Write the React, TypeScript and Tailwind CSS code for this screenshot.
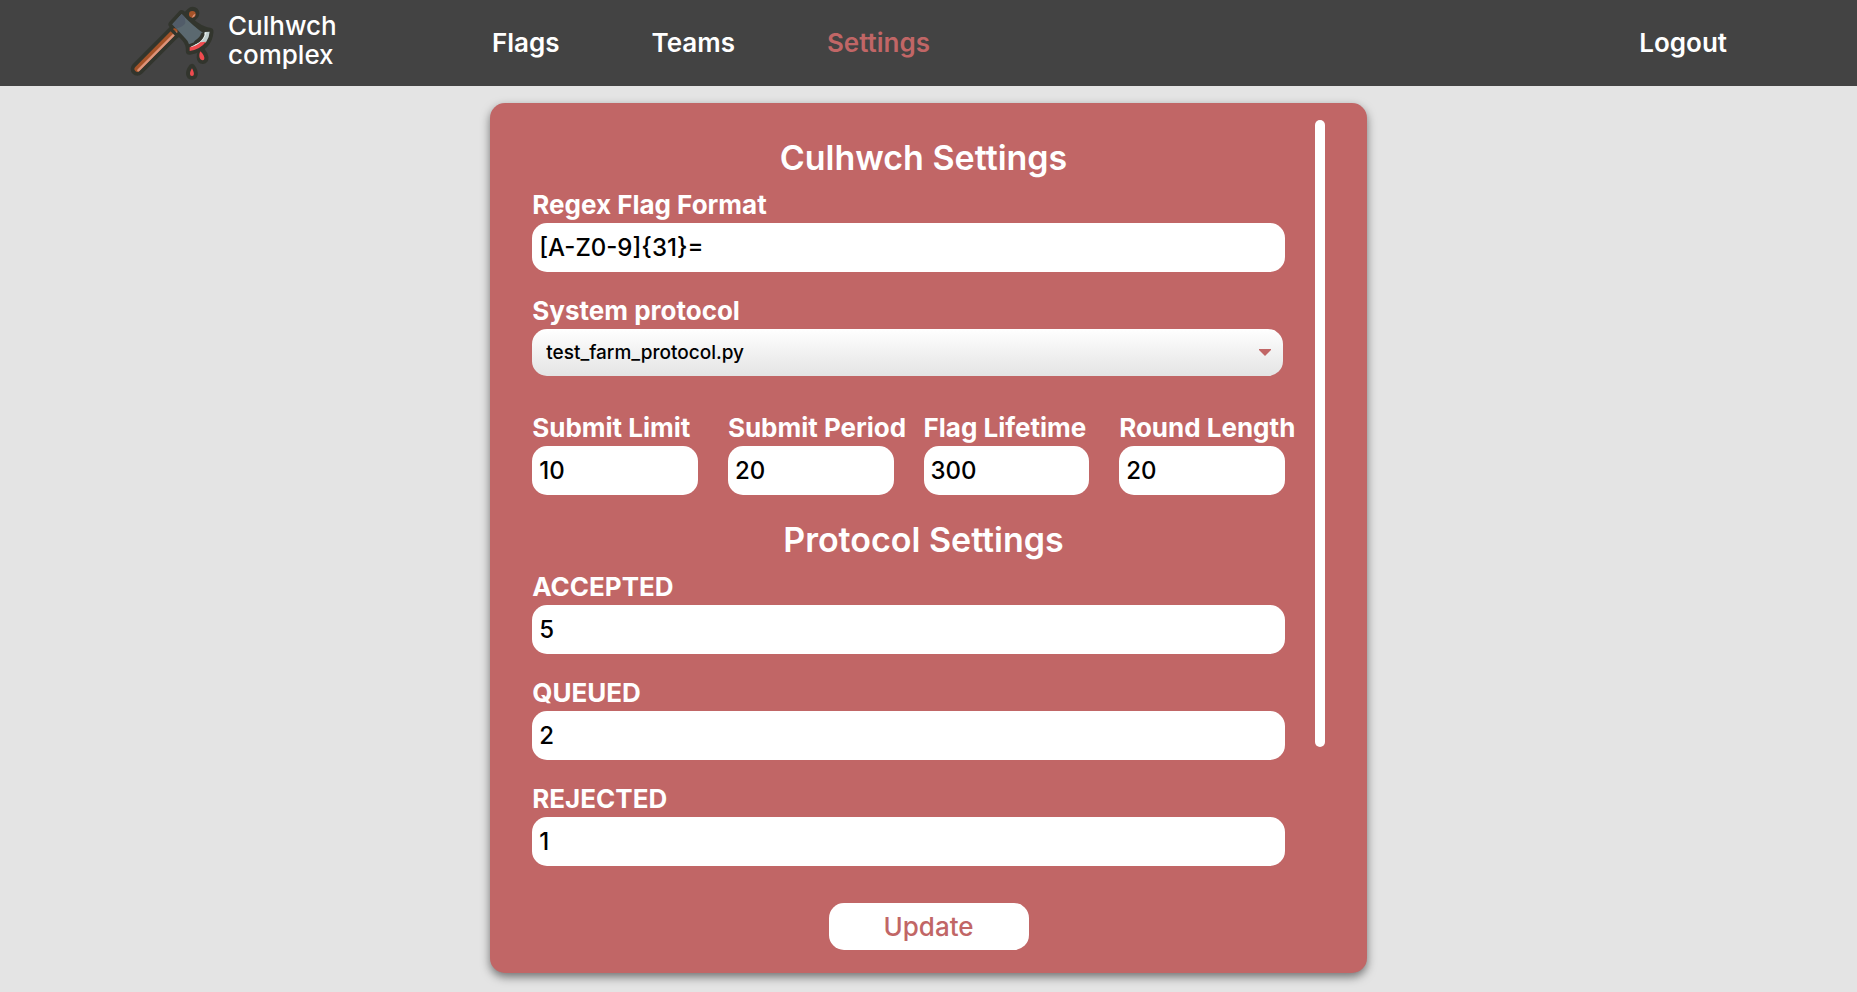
import { useState } from "react";

const numberFields = [
  { id: "submit-limit", label: "Submit Limit", value: "10" },
  { id: "submit-period", label: "Submit Period", value: "20" },
  { id: "flag-lifetime", label: "Flag Lifetime", value: "300" },
  { id: "round-length", label: "Round Length", value: "20" },
];

const protocolFields = [
  { id: "accepted", label: "ACCEPTED", value: "5" },
  { id: "queued", label: "QUEUED", value: "2" },
  { id: "rejected", label: "REJECTED", value: "1" },
];

function AxeLogo() {
  return (
    <svg viewBox="30 15 252 225" className="h-[75px] w-[84px] shrink-0" aria-hidden="true">
      <g stroke="#32352d" strokeLinecap="round" strokeLinejoin="round" fill="#32352d">
        <path d="M52 204L218 37" strokeWidth="40" />
        <path
          d="M185 39L157 70L197 113Q210 128 209 150Q266 139 269 92Q235 88 185 39Z"
          strokeWidth="23"
        />
        <path d="M246 152C238 164 240 178 248 178C257 178 257 164 246 152Z" strokeWidth="22" />
        <path d="M216 199C204 215 207 226 216 226C225 226 227 215 216 199Z" strokeWidth="20" />
      </g>
      <path d="M52 204L164 91" stroke="#a65328" strokeWidth="17" strokeLinecap="round" />
      <path d="M55 208L168 95" stroke="#dd937a" strokeWidth="7" strokeLinecap="round" />
      <path d="M150 82L176 108" stroke="#32352d" strokeWidth="10" />
      <circle cx="217" cy="40" r="10" fill="#a65328" />
      <path d="M215 50Q225 48 226 38L220 42Z" fill="#dd937a" />
      <path d="M185 39L157 70L197 113Q205 120 207 130L226 122L250 96Q222 78 185 39Z" fill="#5b6970" />
      <path d="M185 39L157 70L169 82Q190 78 196 66Q196 55 193 47Z" fill="#515c69" />
      <path d="M254 93L269 92Q268 110 258 124L226 134Q250 118 254 93Z" fill="#bfcdcd" />
      <path d="M258 94Q252 118 224 134L213 139" stroke="#e8efed" strokeWidth="4" fill="none" />
      <path d="M248 101Q243 115 228 123" stroke="#32352d" strokeWidth="11" strokeLinecap="round" fill="none" />
      <path d="M209 139Q230 136 241 124L258 122Q242 144 209 150Z" fill="#ef4b4f" />
      <path d="M241 151C234 166 240 178 248 178C257 178 254 162 241 151Z" fill="#ef4b4f" />
      <path d="M216 202C207 216 209 225 216 225C223 225 224 216 216 202Z" fill="#ef4b4f" />
    </svg>
  );
}

function Field({ id, label, value }: { id: string; label: string; value: string }) {
  return (
    <div className="flex min-w-0 flex-col">
      <label htmlFor={id} className="h-[31px] text-[26px] leading-[25px] font-bold whitespace-nowrap">
        {label}
      </label>
      <input
        id={id}
        type="text"
        defaultValue={value}
        className="h-[49px] w-full rounded-[15px] bg-white px-[7px] text-2xl font-medium text-black outline-none"
      />
    </div>
  );
}

export default function App() {
  const [protocol, setProtocol] = useState("test_farm_protocol.py");

  return (
    <div className="flex min-h-screen flex-col bg-[#e4e4e4] font-['Inter','Liberation_Sans',sans-serif] text-white">
      <header className="flex h-[86px] items-center bg-[#434343] px-[7%] text-[26px] font-semibold">
        <a href="#home" className="flex w-[362px] items-center gap-[14px] font-medium">
          <AxeLogo />
          <span className="pb-[6px] leading-[29px]">
            Culhwch
            <br />
            complex
          </span>
        </a>
        <nav className="flex flex-1 gap-[92px] pb-[2px]">
          <a href="#flags">Flags</a>
          <a href="#teams">Teams</a>
          <a href="#settings" aria-current="page" className="text-[#c16666]">
            Settings
          </a>
        </nav>
        <a href="#logout" className="pb-[2px]">
          Logout
        </a>
      </header>

      <main className="flex flex-1 justify-center pt-[17px] pb-[19px]">
        <form
          onSubmit={(event) => event.preventDefault()}
          className="flex w-[47.2%] min-w-[800px] flex-col rounded-[15px] bg-[#c16666] px-[42px] pt-[17px] pb-[23px] shadow-[0_4px_10px_rgba(0,0,0,0.5)]"
        >
          <div className="flex flex-1">
            <div className="flex-1 pt-[18px]">
              <h1 className="text-center text-[34px] leading-[39px] font-semibold">Culhwch Settings</h1>
              <div className="mt-[15px] mr-[30px]">
                <Field id="regex" label="Regex Flag Format" value="[A-Z0-9]{31}=" />
              </div>
              <div className="mt-[26px] mr-8 flex flex-col">
                <label htmlFor="protocol" className="h-[31px] text-[26px] leading-[25px] font-bold">
                  System protocol
                </label>
                <div className="relative">
                  <select
                    id="protocol"
                    value={protocol}
                    onChange={(event) => setProtocol(event.target.value)}
                    className="h-[47px] w-full appearance-none rounded-[15px] bg-linear-to-b from-white to-[#e4e4e4] px-[14px] pt-[2px] text-[19px] font-medium text-black outline-none"
                  >
                    <option>test_farm_protocol.py</option>
                  </select>
                  <svg
                    viewBox="0 0 12 7"
                    className="pointer-events-none absolute top-5 right-3 h-[7px] w-3"
                    aria-hidden="true"
                  >
                    <path d="M0 0H12V1L6 7L0 1Z" fill="#c16666" />
                  </svg>
                </div>
              </div>
              <div className="mt-[39px] mr-[30px] grid grid-cols-4 gap-[30px]">
                {numberFields.map((field) => (
                  <Field key={field.id} {...field} />
                ))}
              </div>
              <h2 className="mt-[25px] text-center text-[34px] leading-[39px] font-semibold">Protocol Settings</h2>
              <div className="mt-[15px] mr-[30px] flex flex-col gap-[26px]">
                {protocolFields.map((field) => (
                  <Field key={field.id} {...field} />
                ))}
              </div>
            </div>
            <div className="w-[10px]" aria-hidden="true">
              <div className="h-[84%] rounded-full bg-white" />
            </div>
          </div>
          <button
            type="submit"
            className="mt-[37px] h-[47px] w-[200px] self-center rounded-[15px] bg-white text-[26px] font-medium text-[#c16666]"
          >
            Update
          </button>
        </form>
      </main>
    </div>
  );
}
